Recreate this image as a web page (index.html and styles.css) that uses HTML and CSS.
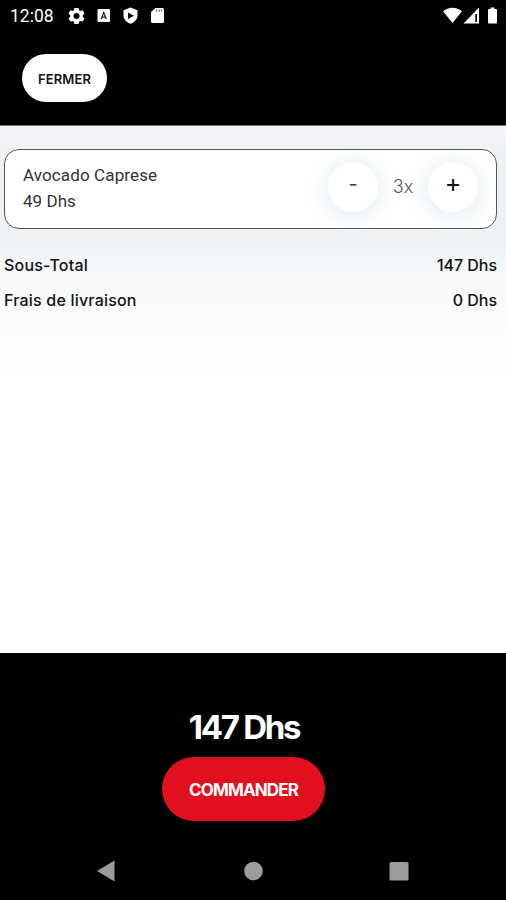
FILE: index.html
```html
<!DOCTYPE html>
<html lang="fr">
<head>
<meta charset="utf-8">
<title>Panier</title>
<link rel="stylesheet" href="styles.css">
</head>
<body>
<div class="screen">
  <header class="top">
    <div class="status">
      <span class="clock">12:08</span>
      <svg class="notifications" width="100" height="20" viewBox="0 0 100 20" fill="#fff">
        <path fill-rule="evenodd" d="M6.4 2h4.200l.6 2.200 1.200.7 2.200-.6 1.900 3.200-1.700 1.700v1.500l1.700 1.700-1.900 3.200-2.200-.6-1.200.7-.6 2.300H6.400l-.6-2.300-1.200-.7-2.200.6-1.900-3.200 1.700-1.700V9.200l-1.700-1.700 1.900-3.200 2.200.6 1.200-.7zM8.500 7a3 3 0 1 0 0 6 3 3 0 0 0 0-6z"/>
        <rect x="29.500" y="3" width="12.500" height="13" rx="1"/>
        <path d="M33.200 13l2.500-6.500L38.300 13M34.500 11.200H37" fill="none" stroke="#222" stroke-width="1.200"/>
        <path d="M62.500 1.500l7 2.700v5.300c0 3.800-3 7-7 8.200-4-1.200-7-4.400-7-8.200V4.200z"/>
        <path d="M60 6.500l6 3.300-6 3.300z" fill="#111"/>
        <path d="M87.500 2H94.500a1.500 1.500 0 0 1 1.500 1.500v12a1.500 1.500 0 0 1-1.500 1.500h-10a1.500 1.500 0 0 1-1.500-1.500V6z"/>
        <path d="M88.700 3.500v2.300M91.200 3.500v2.300M93.700 3.500v2.300" stroke="#555" stroke-width="1"/>
      </svg>
      <svg class="signals" width="58" height="20" viewBox="0 0 58 20" fill="#fff">
        <path d="M0 5.200C5.500.5 13.500.5 19 5.200L9.500 17z"/>
        <path fill-rule="evenodd" d="M36 1.500V17.500H20.500zM32.300 8v8h1.700V8z"/>
        <path d="M47.500 1.500h4V3H53q1 0 1 1v12.500q0 1-1 1h-7q-1 0-1-1V4q0-1 1-1h1.500z"/>
      </svg>
    </div>
    <button class="close"><span>FERMER</span></button>
  </header>

  <main class="cart">
    <section class="item">
      <div class="details">
        <div class="name">Avocado Caprese</div>
        <div class="price">49 Dhs</div>
      </div>
      <div class="stepper">
        <button class="round"><span class="minus">-</span></button>
        <span class="quantity">3x</span>
        <button class="round"><span class="plus">+</span></button>
      </div>
    </section>
    <div class="line"><span class="label">Sous-Total</span><span class="amount">147 Dhs</span></div>
    <div class="line"><span class="label">Frais de livraison</span><span class="amount">0 Dhs</span></div>
  </main>

  <footer class="bottom">
    <div class="total">147 Dhs</div>
    <button class="order"><span>COMMANDER</span></button>
    <svg class="nav" width="506" height="30" viewBox="0 0 506 30" fill="#9c9c9c">
      <path d="M97 16L114.500 5.500v21z"/>
      <circle cx="253.500" cy="16" r="9.300"/>
      <rect x="389.500" y="7" width="19" height="18.500" rx="1.500"/>
    </svg>
  </footer>
</div>
</body>
</html>
```
FILE: styles.css
```css
* { box-sizing: border-box; }

body {
  margin: 0;
  font-family: Inter, "Liberation Sans", sans-serif;
  color: #111;
  background: #fff;
}

button {
  display: flex;
  align-items: center;
  justify-content: center;
  padding: 0;
  border: 0;
  font-family: inherit;
  white-space: nowrap;
}

.screen {
  display: flex;
  flex-direction: column;
  height: 900px;
  overflow: hidden;
}

.top {
  height: 126px;
  background: #000;
  border-bottom: 1px solid #777;
}

.status {
  display: flex;
  height: 54px;
  padding: 6px 8px 0 10px;
}

.clock {
  width: 58px;
  color: #fff;
  font: 400 17.500px/20px Roboto, sans-serif;
}

.signals { margin-left: auto; margin-right: -3px; }

.close {
  width: 85px;
  height: 48px;
  margin-left: 22px;
  border-radius: 24px;
  background: #fff;
  color: #111;
  font-size: 13px;
  font-weight: 600;
  letter-spacing: 0.100px;
}

.close span { margin-top: 2px; }

.cart {
  flex: 1;
  padding: 23px 9px 0 4px;
  background: linear-gradient(180deg, #f5f6f8 0, #eff2f5 22px, #eff2f5 112px, #f7f9fb 155px, #fdfdfe 205px, #fff 245px);
}

.item {
  display: flex;
  justify-content: space-between;
  height: 80px;
  margin-bottom: 18px;
  padding: 0 18px;
  border: 1px solid #555;
  border-radius: 15px;
  background: #fff;
  overflow: hidden;
}

.details {
  padding-top: 12px;
  font: 400 17px/26px Roboto, sans-serif;
  color: #333;
}

.name { letter-spacing: 0.120px; }
.price { letter-spacing: 0.050px; }

.stepper { display: flex; align-items: center; padding-bottom: 4px; }

.round {
  width: 50px;
  height: 50px;
  border-radius: 50%;
  background: #fff;
  color: #111;
  box-shadow: 0 3px 22px 2px #e2ecf1;
}

.minus { font-size: 20px; line-height: 24px; margin-bottom: 6px; color: #444; }
.plus { font-size: 25px; line-height: 28px; margin-bottom: 8px; }

.quantity {
  width: 50px;
  margin-top: -2px;
  text-align: center;
  font-size: 18px;
  font-weight: 300;
  color: #555;
}

.line {
  display: flex;
  justify-content: space-between;
  height: 35px;
  line-height: 36px;
  font-size: 16px;
  font-weight: 500;
}

.label { letter-spacing: 0.200px; }
.amount { letter-spacing: -0.050px; }

.bottom {
  display: flex;
  flex-direction: column;
  align-items: center;
  height: 247px;
  padding-top: 54px;
  background: #000;
  color: #fff;
}

.total {
  height: 50px;
  margin-right: 18px;
  font-size: 33px;
  line-height: 40px;
  font-weight: 700;
  letter-spacing: -2.300px;
}

.order {
  width: 163px;
  height: 64px;
  margin-right: 19px;
  border-radius: 32px;
  background: #e20f1e;
  color: #fff;
  font-size: 17px;
  font-weight: 700;
  letter-spacing: -0.850px;
}

.order span { margin-top: 1px; }

.nav { display: block; margin-top: 34px; }
```
